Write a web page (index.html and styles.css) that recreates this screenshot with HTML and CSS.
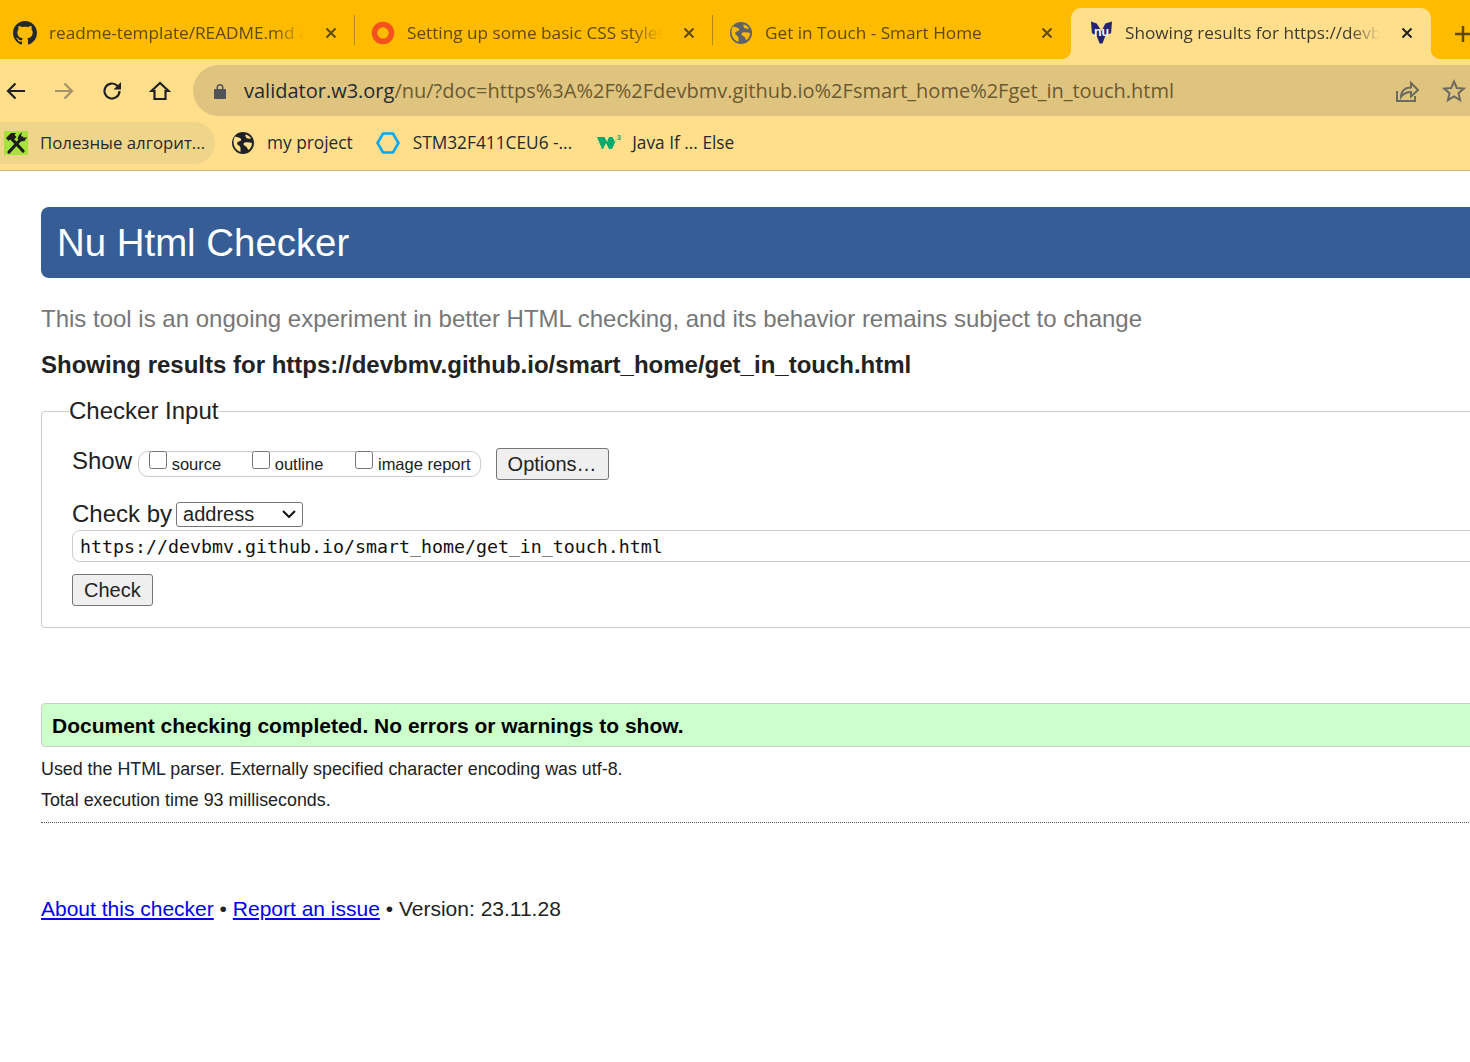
FILE: index.html
```html
<!DOCTYPE html>
<html lang="en">
<head>
    <meta charset="UTF-8">
    <meta name="viewport" content="width=device-width, initial-scale=1.0">
    <title>Showing results for https://devbmv.github.io/smart_home/get_in_touch.html - Nu Html Checker</title>
    <link rel="stylesheet" href="styles.css">
</head>
<body>
    <div class="browser">
        <div class="tabstrip">
            <div class="tab">
                <svg class="favicon" viewBox="0 0 16 16"><path fill="#24292e" d="M8 0C3.58 0 0 3.58 0 8c0 3.54 2.29 6.53 5.47 7.59.4.07.55-.17.55-.38 0-.19-.01-.82-.01-1.49-2.01.37-2.53-.49-2.69-.94-.09-.23-.48-.94-.82-1.13-.28-.15-.68-.52-.01-.53.63-.01 1.08.58 1.23.82.72 1.21 1.87.87 2.33.66.07-.52.28-.87.51-1.07-1.78-.2-3.64-.89-3.64-3.95 0-.87.31-1.59.82-2.15-.08-.2-.36-1.02.08-2.12 0 0 .67-.21 2.2.82.64-.18 1.32-.27 2-.27s1.36.09 2 .27c1.53-1.04 2.2-.82 2.2-.82.44 1.1.16 1.92.08 2.12.51.56.82 1.27.82 2.15 0 3.07-1.87 3.75-3.65 3.95.29.25.54.73.54 1.48 0 1.07-.01 1.93-.01 2.2 0 .21.15.46.55.38A8.01 8.01 0 0 0 16 8c0-4.42-3.58-8-8-8z"/></svg>
                <span class="tab-title">readme-template/README.md a</span>
                <svg class="tab-close" viewBox="0 0 12 12"><path d="M1.5 1.5l9 9M10.5 1.5l-9 9"/></svg>
            </div>
            <div class="tab-sep"></div>
            <div class="tab">
                <svg class="favicon" viewBox="0 0 24 24"><circle cx="12" cy="12" r="8.500" fill="none" stroke="#f4511e" stroke-width="5.500"/></svg>
                <span class="tab-title">Setting up some basic CSS styles</span>
                <svg class="tab-close" viewBox="0 0 12 12"><path d="M1.5 1.5l9 9M10.5 1.5l-9 9"/></svg>
            </div>
            <div class="tab-sep"></div>
            <div class="tab">
                <svg class="favicon" viewBox="0 0 24 24"><circle cx="12" cy="12" r="11" fill="#5f6368"/><path fill="#ffbb00" d="M4 5.500c2.500.5 5 1 6 2.500.8 1.300-1 2.200-2.500 2.600C6 11.200 5.500 13 7 14c1.200.9 2.500 1.200 2.500 3v4l-2-1C4 18 2.500 14 2.500 11c0-2 .5-4 1.500-5.500zM14.500 3.500c2.500.5 4.500 2 5.500 4-1.500.5-3.500.2-4.800-.8-.7-.8-.9-2.200-.7-3.200zM21 12c0 3-1.500 5.500-3.500 7-1-.8-1.200-2.200-2.200-3.200-1-1-2.800-1.300-2.800-2.800 0-1.500 2-2 3.500-1.800 1.800.2 3.500.5 5 .8z"/></svg>
                <span class="tab-title">Get in Touch - Smart Home</span>
                <svg class="tab-close" viewBox="0 0 12 12"><path d="M1.5 1.5l9 9M10.5 1.5l-9 9"/></svg>
            </div>
            <div class="tab tab-active">
                <svg class="favicon favicon-nu" viewBox="0 0 24 24"><path fill="#23236e" d="M1 0l6 2 5 8 4-8 7-2-1 12-6 3-3 8h-3l-3-8-5-3z"/><text x="12" y="15" class="nu-text">nu</text></svg>
                <span class="tab-title">Showing results for https://devb</span>
                <svg class="tab-close" viewBox="0 0 12 12"><path d="M1.500 1.500l9 9M10.500 1.500l-9 9"/></svg>
            </div>
            <svg class="new-tab" viewBox="0 0 16 16"><path d="M8 0v16M0 8h16"/></svg>
        </div>

        <div class="toolbar">
            <svg class="nav-icon" viewBox="0 0 24 24"><path d="M21 12H4M11.500 4.500L4 12l7.500 7.500"/></svg>
            <svg class="nav-icon nav-off" viewBox="0 0 24 24"><path d="M3 12h17M12.500 4.500L20 12l-7.500 7.500"/></svg>
            <svg class="nav-icon" viewBox="0 0 24 24"><path d="M19.500 12a7.500 7.500 0 1 1-2.200-5.300L20 9.500"/><path class="nav-fill" d="M21 3v7.500h-7.500z"/></svg>
            <svg class="nav-icon" viewBox="0 0 24 24"><path d="M12 4L3.500 12H6.500v8h11v-8h3z"/></svg>
            <div class="omnibox">
                <svg class="lock" viewBox="0 0 12 16"><path d="M2.500 6V4.500a3.500 3.500 0 0 1 7 0V6H11a1 1 0 0 1 1 1v8a1 1 0 0 1-1 1H1a1 1 0 0 1-1-1V7a1 1 0 0 1 1-1zM4 6h4V4.500a2 2 0 0 0-4 0z"/></svg>
                <span class="url"><span class="url-host">validator.w3.org</span>/nu/?doc=https%3A%2F%2Fdevbmv.github.io%2Fsmart_home%2Fget_in_touch.html</span>
                <svg class="omni-icon" viewBox="0 0 24 24"><path d="M2 12v10h18v-5"/><path d="M6 18c0-6 4-9.500 10-9.500V4l7 7-7 6.500v-4.500c-4 0-7.500 1.500-10 5z"/></svg>
                <svg class="omni-icon" viewBox="0 0 24 24"><path d="M12 2.500l2.800 6.500 7 .6-5.300 4.600 1.600 6.900-6.100-3.700-6.100 3.700 1.600-6.900-5.300-4.600 7-.6z"/></svg>
            </div>
        </div>

        <div class="bookmarks">
            <div class="bookmark bookmark-hover">
                <svg class="bm-icon" viewBox="0 0 24 24"><rect width="24" height="24" fill="#a5e23c"/><path stroke="#1c1c1c" stroke-width="3.200" stroke-linecap="round" d="M5 21L18 7M19 20L7 7"/><path fill="#1c1c1c" d="M2 7l5-5h5l-1.500 2 2 2-4 4-2-2-2 2zM15 4l3-3-1 4 2 2 4-1-2.500 4-4 .5-3-3z"/></svg>
                <span>Полезные алгорит...</span>
            </div>
            <div class="bookmark bookmark-project">
                <svg class="bm-icon" viewBox="0 0 24 24"><circle cx="12" cy="12" r="11" fill="#202124"/><path fill="#ffdf8c" d="M4 5.500c2.500.5 5 1 6 2.500.8 1.300-1 2.200-2.500 2.600C6 11.200 5.500 13 7 14c1.200.9 2.500 1.200 2.500 3v4l-2-1C4 18 2.500 14 2.500 11c0-2 .5-4 1.500-5.500zM14.500 3.500c2.500.5 4.500 2 5.500 4-1.500.5-3.500.2-4.800-.8-.7-.8-.9-2.200-.7-3.200zM21 12c0 3-1.500 5.500-3.500 7-1-.8-1.200-2.200-2.200-3.200-1-1-2.800-1.300-2.800-2.800 0-1.500 2-2 3.500-1.800 1.800.2 3.500.5 5 .8z"/></svg>
                <span>my project</span>
            </div>
            <div class="bookmark bookmark-stm">
                <svg class="bm-icon" viewBox="0 0 24 24"><path fill="none" stroke="#03a9f4" stroke-width="2.600" d="M7 2.500h10l5.500 9.500-5.500 9.500H7L1.500 12z"/></svg>
                <span>STM32F411CEU6 -...</span>
            </div>
            <div class="bookmark">
                <svg class="bm-icon bm-w3" viewBox="0 0 26 18"><path fill="#04aa6d" d="M0 3h7.500l2.500 5 2-5h3.500l2.500 5 2.500-5-5.500 12h-3l-3-6-3 6H5z"/><text x="20" y="6" class="bm-w3-num">3</text></svg>
                <span>Java If ... Else</span>
            </div>
        </div>
    </div>

    <div class="page">
        <h1 class="title">Nu Html Checker</h1>
        <p class="subtitle">This tool is an ongoing experiment in better HTML checking, and its behavior remains subject to change</p>
        <h2 class="results-for">Showing results for https://devbmv.github.io/smart_home/get_in_touch.html</h2>

        <fieldset class="checker">
            <legend>Checker Input</legend>
            <div class="show-row">
                <span class="show-label">Show</span>
                <div class="show-box">
                    <label class="show-opt show-source"><input type="checkbox"> source</label>
                    <label class="show-opt show-outline"><input type="checkbox"> outline</label>
                    <label class="show-opt"><input type="checkbox"> image report</label>
                </div>
                <button class="btn btn-options" type="button">Options…</button>
            </div>
            <div class="checkby-row">
                <span>Check by</span>
                <select class="checkby-select"><option>address</option></select>
            </div>
            <input class="doc-input" type="text" value="https://devbmv.github.io/smart_home/get_in_touch.html">
            <button class="btn btn-check" type="button">Check</button>
        </fieldset>

        <p class="success">Document checking completed. No errors or warnings to show.</p>
        <p class="stats">Used the HTML parser. Externally specified character encoding was utf-8.</p>
        <p class="stats">Total execution time 93 milliseconds.</p>
        <hr class="rule">
        <p class="footer"><a href="#">About this checker</a> • <a href="#">Report an issue</a> • Version: 23.11.28</p>
    </div>
</body>
</html>
```

FILE: styles.css
```css
html, body {
    margin: 0;
    height: 100%;
    overflow: hidden;
    background: #fff;
}

/* browser chrome */
.browser {
    font-family: "Open Sans", "Noto Sans", sans-serif;
    background-color: #ffdf8c;
    border-bottom: 1px solid #c9b67c;
    width: 1470px;
}

.tabstrip {
    display: flex;
    align-items: center;
    height: 59px;
    background-color: #ffbb00;
    padding-left: 13px;
    overflow: hidden;
}

.tab {
    display: flex;
    align-items: center;
    width: 324px;
    height: 51px;
    margin-top: 8px;
    padding-bottom: 1px;
    box-sizing: border-box;
    flex-shrink: 0;
}

.favicon {
    width: 24px;
    height: 24px;
    flex-shrink: 0;
}

.favicon-nu {
    width: 23px;
}

.nu-text {
    font-family: "Liberation Sans", sans-serif;
    font-size: 13px;
    font-weight: bold;
    text-anchor: middle;
    fill: #fff;
}

.tab-title {
    width: 258px;
    margin-left: 12px;
    margin-right: 18px;
    padding-bottom: 2px;
    white-space: nowrap;
    overflow: hidden;
    font-size: 17.200px;
    color: #5e4a0c;
    -webkit-mask-image: linear-gradient(to right, #000 87%, transparent 99%);
    mask-image: linear-gradient(to right, #000 87%, transparent 99%);
}

.tab-close {
    width: 12px;
    height: 12px;
    flex-shrink: 0;
    fill: none;
    stroke: #5e4a0c;
    stroke-width: 2;
}

.tab-sep {
    width: 1px;
    height: 30px;
    background-color: #b08a12;
    margin: 0 16px 0 17px;
    flex-shrink: 0;
}

.tab-active {
    position: relative;
    width: 360px;
    margin-left: 18px;
    padding-left: 19px;
    background-color: #ffdf8c;
    border-radius: 10px 10px 0 0;
}

.tab-active .tab-title {
    color: #3d3a2f;
}

.tab-active .tab-close {
    stroke: #202124;
}

.tab-active::before,
.tab-active::after {
    content: "";
    position: absolute;
    bottom: 0;
    width: 10px;
    height: 10px;
}

.tab-active::before {
    left: -10px;
    background: radial-gradient(circle at 0 0, transparent 10px, #ffdf8c 10.500px);
}

.tab-active::after {
    right: -10px;
    background: radial-gradient(circle at 100% 0, transparent 10px, #ffdf8c 10.500px);
}

.new-tab {
    width: 16px;
    height: 16px;
    margin-left: 24px;
    margin-top: 8px;
    fill: none;
    stroke: #5e4a0c;
    stroke-width: 2.500;
    flex-shrink: 0;
}

.toolbar {
    display: flex;
    align-items: center;
    height: 61px;
    padding-top: 2px;
    box-sizing: border-box;
    padding-left: 4px;
}

.nav-icon {
    width: 24px;
    height: 24px;
    margin-right: 24px;
    flex-shrink: 0;
    fill: none;
    stroke: #202124;
    stroke-width: 2.200;
}

.nav-off {
    stroke: #a3926a;
}

.nav-fill {
    fill: #202124;
    stroke: none;
}

.omnibox {
    display: flex;
    align-items: center;
    height: 51px;
    margin-left: -3px;
    flex: 1;
    margin-right: -30px;
    padding-left: 21px;
    padding-right: 34px;
    background-color: #dfc47f;
    border-radius: 26px;
}

.lock {
    width: 12px;
    height: 16px;
    fill: #52525a;
    flex-shrink: 0;
}

.url {
    margin-left: 18px;
    flex: 1;
    font-size: 20px;
    color: #6b5a30;
    white-space: nowrap;
}

.url-host {
    color: #26292e;
}

.omni-icon {
    width: 24px;
    height: 24px;
    margin-left: 23px;
    fill: none;
    stroke: #6e6a5e;
    stroke-width: 2;
}

.bookmarks {
    display: flex;
    align-items: center;
    height: 50px;
    padding-bottom: 4px;
    box-sizing: border-box;
    font-size: 17.300px;
    color: #26292e;
}

.bookmark {
    display: flex;
    align-items: center;
    gap: 12px;
    height: 42px;
    padding: 0 10px 0 13px;
    white-space: nowrap;
}

.bookmark span {
    padding-bottom: 2px;
}

.bookmark-hover {
    width: 215px;
    box-sizing: border-box;
    padding: 0 0 0 4px;
    margin-right: 3px;
    font-size: 16.800px;
    background-color: #efd58a;
    border-radius: 0 21px 21px 0;
}

.bookmark-stm {
    gap: 13px;
    padding-right: 9px;
    margin-right: 3px;
}

.bm-icon {
    width: 24px;
    height: 24px;
    flex-shrink: 0;
}

.bm-w3 {
    width: 26px;
    height: 18px;
    margin-right: -3px;
}

.bm-w3-num {
    font-family: "Liberation Sans", sans-serif;
    font-size: 7px;
    font-weight: bold;
    fill: #04aa6d;
}

/* validator page */
.page {
    width: 1520px;
    padding: 36px 0 0 41px;
    font-family: "Liberation Sans", Arial, sans-serif;
    color: #222;
}

.title {
    margin: 0;
    height: 71px;
    padding-left: 16px;
    line-height: 71px;
    font-size: 38.400px;
    font-weight: normal;
    color: #fff;
    background-color: #365d95;
    border-radius: 8px;
}

.subtitle {
    margin: 26px 0 0;
    font-size: 24px;
    line-height: 30px;
    color: #777;
}

.results-for {
    margin: 16px 0 0;
    font-size: 24px;
    line-height: 30px;
    font-weight: bold;
}

.checker {
    margin: 17px 0 0;
    padding: 23px 30px 21px;
    min-width: 0;
    height: 231px;
    box-sizing: border-box;
    border: 1px solid #ccc;
    border-radius: 4px;
}

.checker legend {
    margin-left: -3px;
    padding: 0;
    font-size: 24px;
    line-height: 28px;
}

.show-row {
    display: flex;
    align-items: center;
    height: 32px;
    font-size: 24px;
}

.show-label {
    padding-bottom: 6px;
}

.show-box {
    display: flex;
    align-items: center;
    height: 26px;
    box-sizing: border-box;
    margin-left: 6px;
    padding: 0 9px 0 10px;
    border: 1px solid #ccc;
    border-radius: 10px;
}

.show-opt {
    display: flex;
    align-items: center;
    font-size: 16.500px;
    white-space: pre;
}

.show-opt input {
    width: 18px;
    height: 18px;
    margin: -8px 0 0;
}

.show-source {
    margin-right: 31px;
}

.show-outline {
    margin-right: 32px;
}

.btn {
    height: 32px;
    padding: 0 11px;
    font-family: "Liberation Sans", Arial, sans-serif;
    font-size: 20px;
    color: #222;
    background-color: #efefef;
    border: 1px solid #767676;
    border-radius: 3px;
}

.btn-options {
    margin-left: 15px;
}

.checkby-row {
    display: flex;
    align-items: center;
    margin-top: 19px;
    margin-bottom: 1px;
    height: 30px;
    font-size: 24px;
}

.checkby-select {
    width: 127px;
    height: 25px;
    margin-left: 4px;
    padding: 0 0 0 6px;
    font-family: "Liberation Sans", Arial, sans-serif;
    font-size: 20px;
    color: #222;
    -webkit-appearance: none;
    appearance: none;
    background: #fff url("data:image/svg+xml,%3Csvg xmlns='http://www.w3.org/2000/svg' width='14' height='8'%3E%3Cpath d='M1 1l6 6 6-6' fill='none' stroke='%23111' stroke-width='2'/%3E%3C/svg%3E") no-repeat right 6px center;
    border: 1px solid #767676;
    border-radius: 3px;
}

.doc-input {
    display: block;
    width: 1500px;
    height: 32px;
    margin: 0;
    padding: 0 7px;
    box-sizing: border-box;
    font-family: "DejaVu Sans Mono", monospace;
    font-size: 18.270px;
    color: #111;
    border: 1px solid #ccc;
    border-radius: 8px;
}

.btn-check {
    display: block;
    margin-top: 12px;
}

.success {
    margin: 75px 0 0;
    height: 44px;
    box-sizing: border-box;
    padding-left: 10px;
    line-height: 44px;
    font-size: 21px;
    font-weight: bold;
    color: #000;
    background-color: #ccffcc;
    border: 1px solid #ccc;
    border-radius: 4px;
}

.stats {
    margin: 10px 0 0;
    font-size: 17.850px;
    line-height: 24px;
}

.stats + .stats {
    margin-top: 7px;
}

.rule {
    margin: 10px 0 0;
    border: 0;
    border-top: 1px dotted #555;
}

.footer {
    margin: 73px 0 0;
    font-size: 21px;
    line-height: 26px;
}

.footer a {
    color: #0000ee;
}
```
